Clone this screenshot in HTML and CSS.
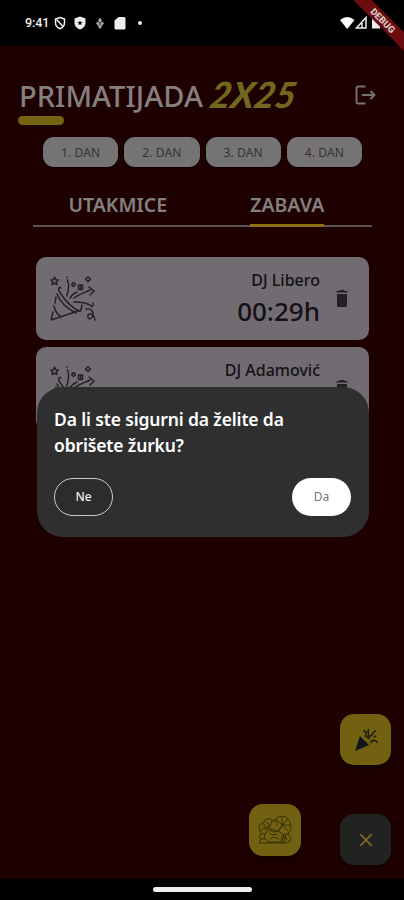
FILE: index.html
```
<!DOCTYPE html>
<html lang="sr">
<head>
<meta charset="utf-8">
<title>Primatijada</title>
<link rel="stylesheet" href="styles.css">
</head>
<body>
<svg width="0" height="0" class="defs">
  <symbol id="popper" viewBox="0 0 46 46">
    <g fill="none" stroke="#222023" stroke-width="1.45" stroke-linecap="round" stroke-linejoin="round">
      <path d="M4.500 1l1.100 2.600 2.800.3-2.100 1.900.6 2.800-2.400-1.500-2.500 1.500.7-2.800L.8 3.900l2.700-.3zM38 .8l2.500 2.400L38 5.600l-2.500-2.400zM23.500 6.500l2 2-2 2-2-2z"/>
      <path d="M28.500 9h4v4.500h-4zM30.500 9v4.500M17 1v.5M17.500 4c2 5 1 11-.8 16M11 12c-2.500-2-3.500 1.500-1 4.500 5 8 11 15 20 19M7 18c3 8 11 15 19 19M6 21L5 27M4 30c1 5 3 8 7 11M3 36L1 44l30-10M31 34l1-5"/>
      <path d="M20 22c2-3 4-5 7-6M24 22c5-4 10-5 16-8M39 11l5 4-4 4M24 26c6 0 11 0 16 3 2 3 4 1 3-2M36 33c8-1 9 7 4 10-4-1-2-6 1-5 3 0 3 3 4 6"/>
    </g>
  </symbol>
  <symbol id="trash" viewBox="0 0 12 17">
    <path fill="#232125" d="M3.500 0h5v1h3v1.500H.5V1h3zM1 4h10v11.500q0 1.500-1.500 1.500h-7Q1 17 1 15.500z"/>
  </symbol>
</svg>
<div class="screen">
  <div class="status">
    <span class="clock">9:41</span>
    <svg class="left-icons" width="92" height="14" viewBox="0 0 92 14">
      <path d="M6 1.500l4.500 1.600v3.600c0 3-2 5-4.500 6-2.500-1-4.500-3-4.500-6V3.100z" fill="none" stroke="#eee" stroke-width="1.500"/>
      <path d="M2.500 3.500l7 7.500" stroke="#eee" stroke-width="1.500"/>
      <path d="M26 .5l5.500 2v4.200c0 3.500-2.500 5.700-5.500 6.800-3-1.100-5.500-3.300-5.500-6.800V2.500z" fill="#eee"/>
      <path d="M26 4.500l.8 1.500 1.700.2-1.300 1.200.3 1.700-1.500-.8-1.500.8.3-1.700-1.300-1.200 1.700-.2z" fill="#111"/>
      <path d="M46 1.500l2 3-2 2.500-2-2.500zM46 13l-2-2.500 2-2 2 2zM42 7l2-1.500L46 8l-2 2zM50 7l-2-1.500L46 8l2 2z" fill="#aaa"/>
      <path d="M64.500 1H70q1.500 0 1.500 1.500V12q0 1.500-1.500 1.500h-8q-1.500 0-1.500-1.500V4.500z" fill="#eee"/>
      <circle cx="86" cy="7" r="2" fill="#eee"/>
    </svg>
    <svg class="right-icons" width="43" height="14" viewBox="0 0 43 14">
      <path d="M0 4Q7.200-1.800 14.500 4L7.200 13z" fill="#fff"/>
      <path d="M16.500 12L26 1.500V12zM22 12V7" fill="none" stroke="#eee" stroke-width="1.500"/>
      <path d="M34 0h4v1.200h2V12.500h-8V1.200h2z" fill="#eee"/>
    </svg>
  </div>
  <header class="header">
    <div class="brand">
      <h1><span class="name">PRIMATIJADA</span><span class="year">2X25</span></h1>
      <div class="accent"></div>
    </div>
    <svg class="logout" width="21" height="20" viewBox="0 0 21 20">
      <path d="M10.500 1.500H3q-1.500 0-1.500 1.500v14q0 1.500 1.500 1.500h7.500M7 10h12M15.500 6l4 4-4 4" fill="none" stroke="#777172" stroke-width="1.900"/>
    </svg>
  </header>
  <nav class="days"><span>1. DAN</span><span>2. DAN</span><span>3. DAN</span><span>4. DAN</span></nav>
  <nav class="tabs">
    <span class="tab"><b>UTAKMICE</b></span>
    <span class="tab active"><b>ZABAVA</b></span>
  </nav>
  <main class="cards">
    <article class="card">
      <svg class="popper"><use href="#popper"/></svg>
      <div class="info"><p class="dj">DJ Libero</p><p class="time">00:29h</p></div>
      <svg class="trash"><use href="#trash"/></svg>
    </article>
    <article class="card">
      <svg class="popper"><use href="#popper"/></svg>
      <div class="info"><p class="dj">DJ Adamović</p></div>
      <svg class="trash"><use href="#trash"/></svg>
    </article>
  </main>
  <div class="navbar"><i></i></div>

  <div class="ribbon">DEBUG</div>
  <section class="dialog">
    <p>Da li ste sigurni da želite da<br>obrišete žurku?</p>
    <div class="actions"><button class="no">Ne</button><button class="yes">Da</button></div>
  </section>
  <div class="fab party">
    <svg width="24" height="24" viewBox="0 0 24 24">
      <path d="M6 8l9 9-14 6z" fill="#10151b"/>
      <path d="M9 3c3-1 4 3 2 6M15 1c-3 2 2 4-2 9M22 3c-4 0-2 4-6 5 0 2-1 2-2 3M17 15c1-4 6-3 6 0M12 4l1 1M20 9l2-1" fill="none" stroke="#1a1a15" stroke-width="1.500"/>
    </svg>
  </div>
  <div class="fab games">
    <svg width="34" height="30" viewBox="0 0 34 30" fill="none" stroke="#302b08" stroke-width=".9">
      <path d="M16 6C19 0 29-1 32 7c2 5 0 9-2 12M24 10l-6-6M24 10V1.500M24 10l6-6M24 10h8.500M24 10l6 6M24 10l-4 6"/>
      <path d="M3 18C-1 13 2 7 6 8c0-5 7-6 8-2 4-2 7 3 4 5M4 11c3-3 5 1 3 4M8 7c2 0 4 3 2 6M14 6c0 3-2 5-3 7M2 16c4-4 7-4 10-1s8 2 12-3"/>
      <path d="M9 16l4-2 9 3 4 4-3 6H10l-4-5zM11 18l3 2 5-1M12 24c3-2 6-2 9 0"/>
      <circle cx="28" cy="23.500" r="4.500"/><path d="M25 20.500l6 6M28 19l-2 8M7 19H3l-2 3 2 2-2 4h25M3 24h4"/>
    </svg>
  </div>
  <div class="fab close">
    <svg width="14" height="14" viewBox="0 0 14 14"><path d="M1.200 1.200l11.600 11.600M12.800 1.200L1.200 12.800" stroke="#7e6a20" stroke-width="1.700"/></svg>
  </div>
</div>
</body>
</html>
```
FILE: styles.css
```
* { box-sizing: border-box; }
body { margin: 0; background: #1e0000; font-family: "Noto Sans", "Open Sans", sans-serif; }
h1, p { margin: 0; }
.defs { position: absolute; }
.screen { position: relative; width: 404px; height: 900px; overflow: hidden; display: flex; flex-direction: column; background: #1e0000; }
.status { height: 46px; flex: none; background: #000; display: flex; align-items: center; padding: 0 21px 0 25px; }
.clock { width: 29px; color: #eee; font: 500 12.500px/16px Roboto, sans-serif; letter-spacing: -.1px; }
.left-icons { margin-right: auto; }
.header { height: 91px; flex: none; display: flex; justify-content: space-between; align-items: flex-start; padding: 32px 28px 0 18px; }
h1 { height: 38px; display: flex; align-items: center; white-space: nowrap; font-size: 29px; line-height: 34px; font-weight: 500; color: #858080; }
.name { width: 191px; padding-left: 1px; letter-spacing: .05px; margin-top: -3px; }
.year { font-family: Lato, sans-serif; font-style: italic; font-weight: 900; font-size: 36px; color: #73661e; margin: -6px 0 0 2px; transform: skewX(-10deg); }
.accent { width: 46px; height: 9px; border-radius: 5px; background: #736512; }
.logout { margin-top: 7px; }
.days { height: 30px; flex: none; display: flex; gap: 6px; padding: 0 42px 0 43px; }
.days span { flex: 1; border-radius: 11px; background: #767374; color: #353233; font-size: 12px; line-height: 31px; text-align: center; letter-spacing: .15px; box-shadow: 0 1px 2px #0008; }
.tabs { height: 60px; flex: none; margin: 0 32px 0 33px; display: flex; border-bottom: 2px solid #5b5152; }
.tab { flex: 1; display: flex; justify-content: center; padding-top: 24px; font-size: 19.500px; line-height: 28px; color: #858080; }
.tab b { font-weight: 600; white-space: nowrap; height: 36px; }
.active b { border-bottom: 3px solid #8a7010; }
.cards { flex: 1; min-height: 0; padding: 30px 35px 0 36px; display: flex; flex-direction: column; gap: 7px; }
.card { height: 83px; flex: none; border-radius: 10px; background: #716c71; display: flex; align-items: center; padding: 0 21px 0 14px; }
.popper { width: 46px; height: 46px; }
.info { margin-left: auto; width: 150px; height: 83px; padding-top: 12px; text-align: right; color: #131114; }
.dj { font-size: 16px; line-height: 22px; font-weight: 500; }
.time { font-size: 26px; line-height: 40px; font-weight: 500; }
.trash { width: 12px; height: 17px; margin-left: 16px; }
.navbar { height: 21px; flex: none; background: #000; display: flex; justify-content: center; padding-top: 8px; }
.navbar i { width: 99px; height: 5px; border-radius: 3px; background: #eee; }
.ribbon { position: absolute; top: 14px; right: -39px; width: 120px; height: 13px; background: #6b0d10; transform: rotate(45deg); text-align: center; color: #d8c4c4; font: 900 9.500px/13px Roboto, sans-serif; }
.dialog { position: absolute; left: 37px; top: 387px; width: 332px; height: 150px; border-radius: 26px; background: #2f2f2f; padding: 19px 18px 0 17px; color: #fff; }
.dialog p { font-size: 17.500px; line-height: 26px; font-weight: 600; white-space: nowrap; letter-spacing: -.14px; }
.actions { display: flex; justify-content: space-between; margin-top: 20px; }
.actions button { width: 59px; height: 38px; border-radius: 19px; font: 500 12px/16px "Noto Sans", sans-serif; padding: 0; }
.actions .no { background: #2c2c2c; color: #eee; border: 1.500px solid #ccc; }
.actions .yes { background: #fff; color: #777; border: 0; font-weight: 400; }
.fab { position: absolute; width: 51px; height: 51px; border-radius: 14px; display: flex; align-items: center; justify-content: center; background: #716111; box-shadow: 0 2px 5px #0006; }
.party { left: 340px; top: 714px; }
.games { left: 249px; top: 804px; width: 52px; height: 52px; }
.close { left: 340px; top: 814px; background: #222321; }
```
